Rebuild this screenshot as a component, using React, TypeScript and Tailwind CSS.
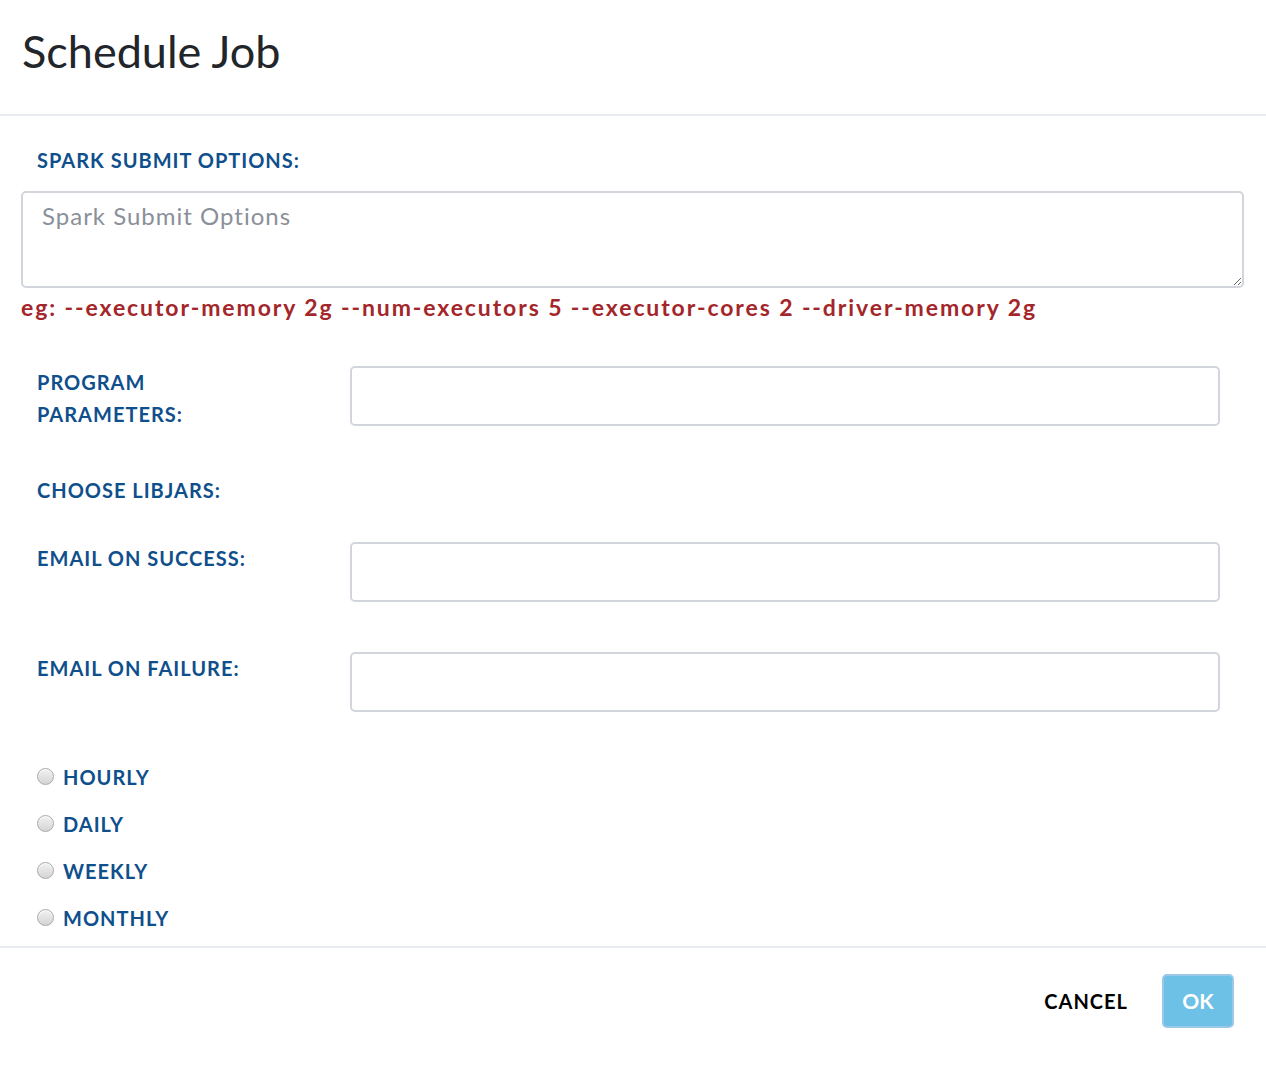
const labelCls =
  "text-[20px] font-bold uppercase leading-[32px] tracking-[1px] text-[#0f4f8c]";

function Row({ label, input = true }: { label: React.ReactNode; input?: boolean }) {
  return (
    <div className="flex items-start">
      <div className={`w-[329px] shrink-0 pl-4 pr-6 ${labelCls}`}>{label}</div>
      {input && (
        <input
          type="text"
          className="mr-[25px] h-[60px] flex-1 rounded-[5px] border-2 border-[#d2d6dc] bg-white px-3 text-[20px] outline-none"
        />
      )}
    </div>
  );
}

export default function App() {
  const options = ["Hourly", "Daily", "Weekly", "Monthly"];
  return (
    <div
      className="min-h-[1076px] w-[1266px] bg-white text-[#222]"
      style={{ fontFamily: "Lato, 'Noto Sans', sans-serif" }}
    >
      <div className="flex h-[116px] items-center border-b-2 border-[#e8ebef] pl-[22px]">
        <h1 className="-mt-[10px] text-[45px] font-normal text-[#222529]">Schedule Job</h1>
      </div>

      <div className="px-[21px] pt-[28px]">
        <div className={`pl-4 ${labelCls}`}>Spark Submit Options:</div>
        <textarea
          placeholder="Spark Submit Options"
          className="mt-[15px] block h-[97px] w-[1223px] rounded-[5px] border-2 border-[#d2d6dc] px-[19px] py-[5px] text-[24px] tracking-[1px] text-[#444] placeholder:text-[#8a9099] outline-none"
        />
        <div className="mt-[2px] text-[23px] font-bold tracking-[1.9px] text-[#a3262a]">
          eg: --executor-memory 2g --num-executors 5 --executor-cores 2 --driver-memory 2g
        </div>

        <div className="mt-[41px] flex flex-col">
          <Row
            label={
              <>
                Program
                <br />
                Parameters:
              </>
            }
          />
          <div className="mt-[44px]">
            <Row label="Choose Libjars:" input={false} />
          </div>
          <div className="mt-[36px]">
            <Row label="Email on Success:" />
          </div>
          <div className="mt-[50px]">
            <Row label="Email on Failure:" />
          </div>
        </div>

        <div className="mt-[49px] flex flex-col gap-[15px] pl-[16px]">
          {options.map((o) => (
            <label key={o} className="flex items-center gap-[9px]">
              <span className="h-[17px] w-[17px] rounded-full border border-[#a9a9a9] bg-gradient-to-b from-[#f2f2f2] to-[#d4d4d4] shadow-[inset_0_1px_1px_rgba(255,255,255,0.8)]" />
              <span className={labelCls}>{o}</span>
            </label>
          ))}
        </div>
      </div>

      <div className="mt-[12px] flex items-center justify-end gap-[34px] border-t-2 border-[#e8ebef] pr-[32px] pt-[26px]">
        <button className="text-[20px] font-bold uppercase tracking-[1px] text-black">Cancel</button>
        <button className="h-[54px] w-[72px] rounded-[5px] border-2 border-[#9cc8e8] bg-[#6dc0e6] text-[21px] font-bold text-white">
          OK
        </button>
      </div>
    </div>
  );
}
